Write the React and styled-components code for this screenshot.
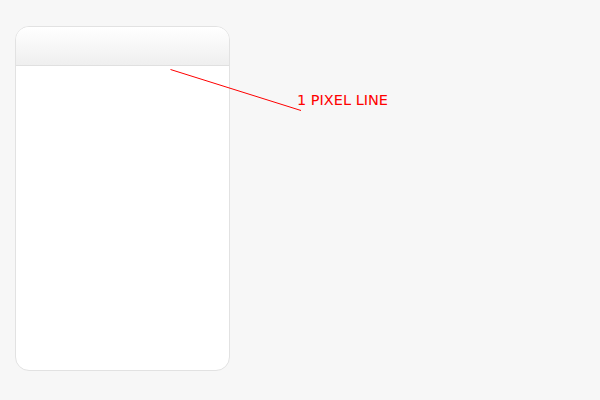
import React from "react";
import styled, { createGlobalStyle } from "styled-components";

const Global = createGlobalStyle`
  html, body { margin: 0; padding: 0; background: #f7f7f7; }
  body { width: 600px; height: 400px; overflow: hidden; font-family: "DejaVu Sans", Verdana, sans-serif; }
`;

const Page = styled.div`
  position: relative;
  width: 600px;
  height: 400px;
  padding: 26px 0 0 15px;
  box-sizing: border-box;
`;

const Card = styled.div`
  width: 215px;
  height: 345px;
  box-sizing: border-box;
  background: #fff;
  border: 1px solid #e2e2e2;
  border-radius: 14px;
  overflow: hidden;
  display: flex;
  flex-direction: column;
`;

const Header = styled.div`
  height: 38px;
  flex: none;
  background: linear-gradient(#ffffff, #efefef);
  border-bottom: 1px solid #e0e0e0;
`;

const Body = styled.div`
  flex: 1;
`;

const Annotation = styled.svg`
  position: absolute;
  left: 0;
  top: 0;
  pointer-events: none;
`;

const Label = styled.span`
  position: absolute;
  left: 297px;
  top: 91px;
  font-size: 14.5px;
  line-height: 18px;
  color: #ff0000;
`;

export default function App() {
  return (
    <>
      <Global />
      <Page>
        <Card>
          <Header />
          <Body />
        </Card>
        <Annotation width="600" height="400">
          <line x1="170.5" y1="69.5" x2="301" y2="110.5" stroke="#ff0000" strokeWidth="1" />
        </Annotation>
        <Label>1 PIXEL LINE</Label>
      </Page>
    </>
  );
}
